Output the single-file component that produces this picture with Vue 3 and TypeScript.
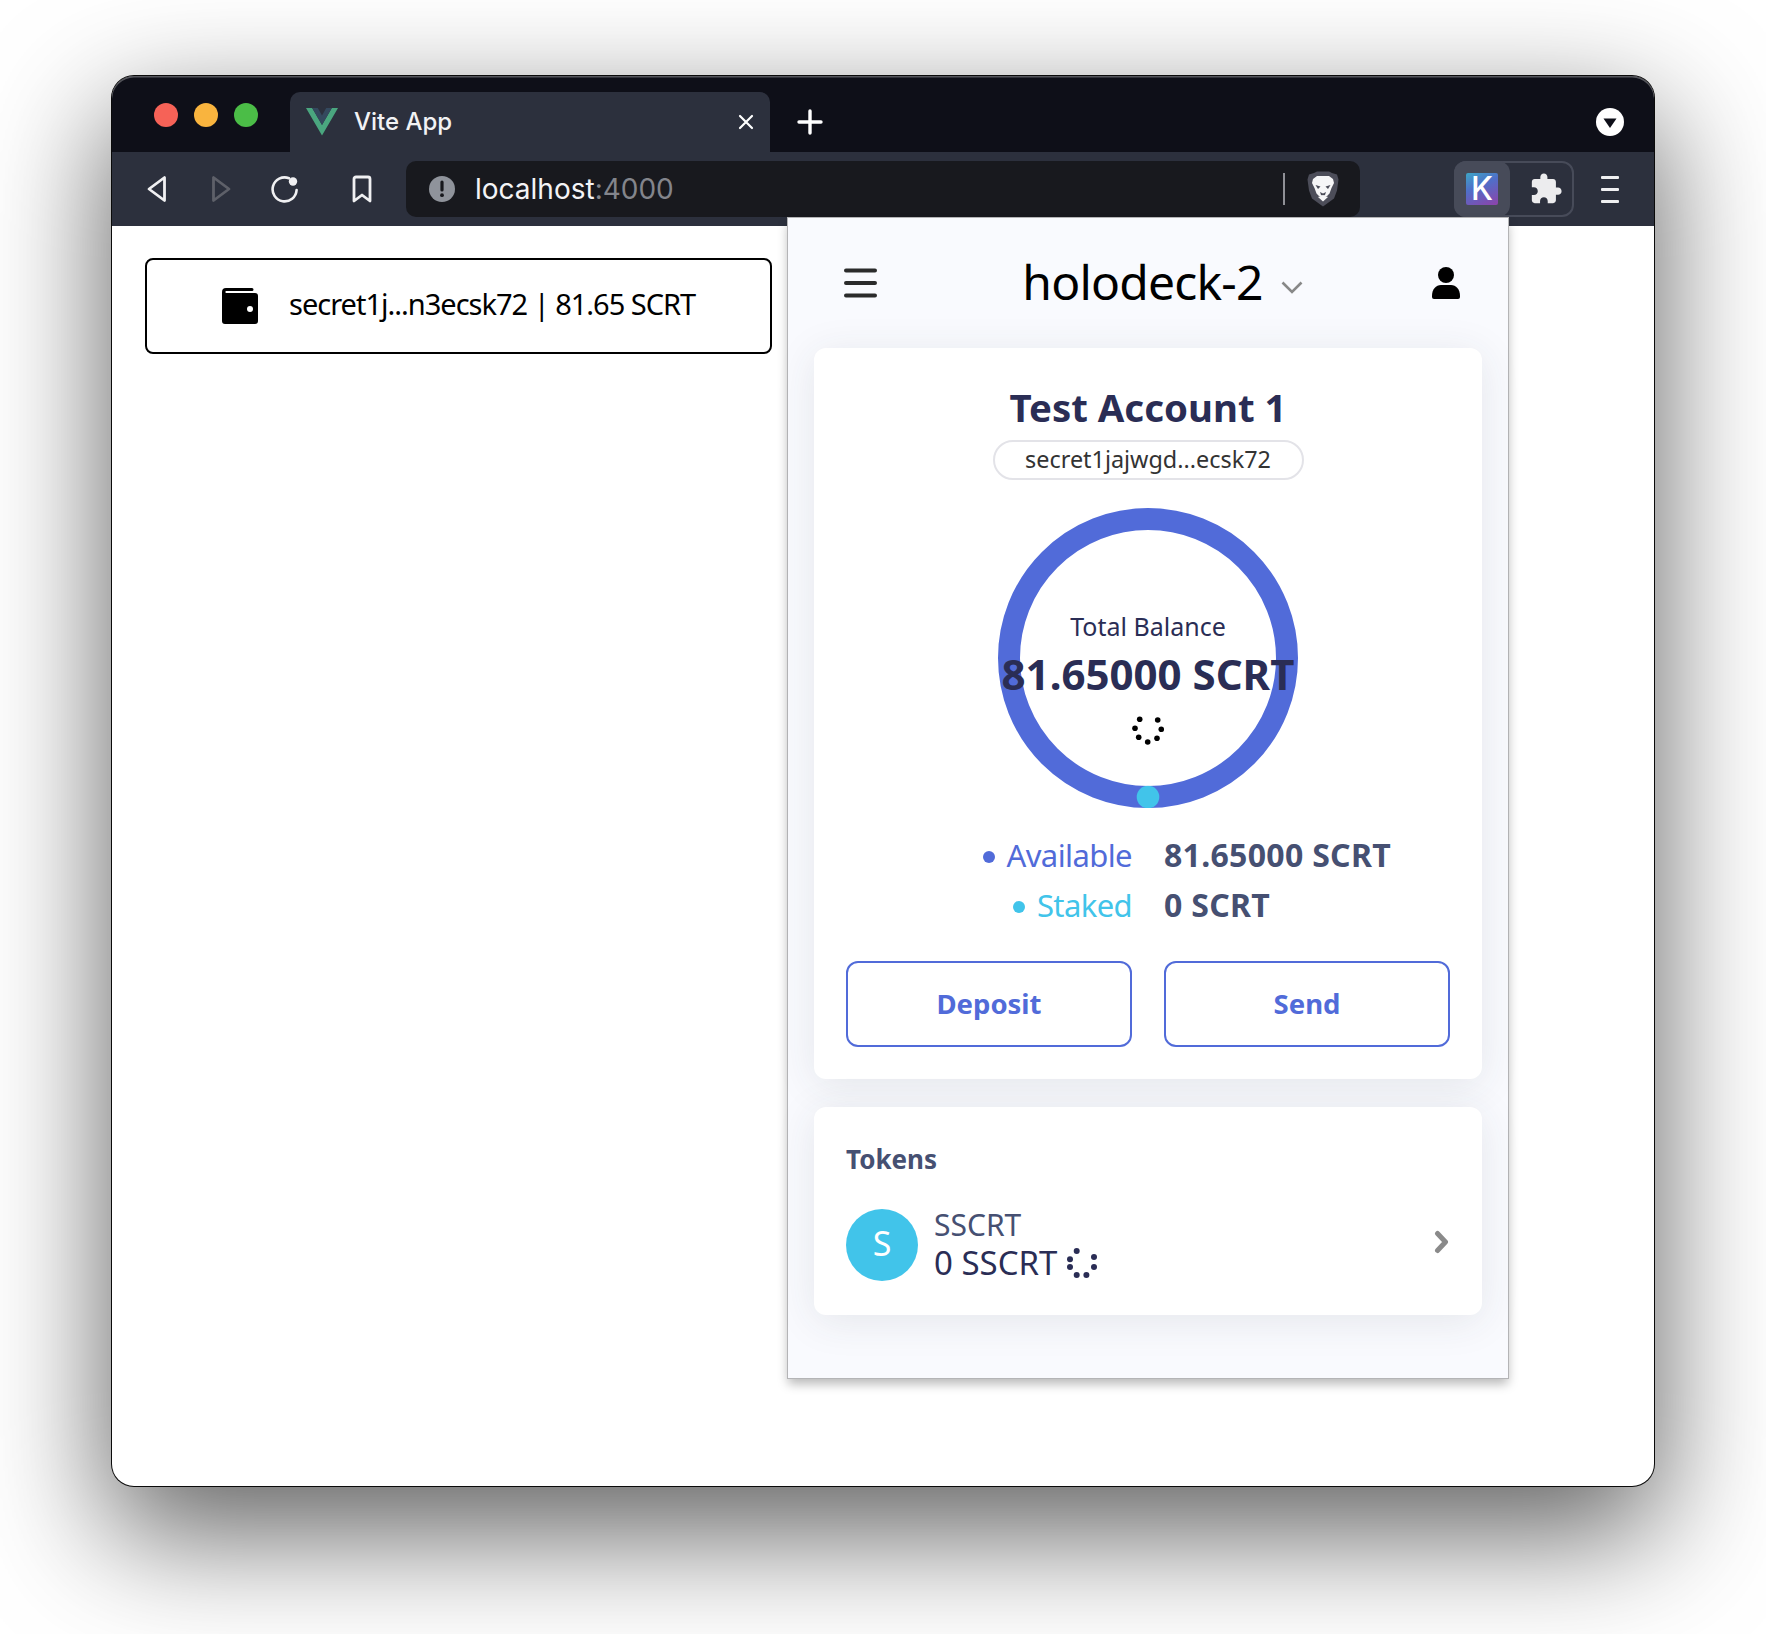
<script setup lang="ts">
const spinnerA = [
  [7.7, 5.3], [25.7, 6], [29.3, 15.3], [25, 24.3], [15.7, 28], [6.7, 23.3], [3, 14.3],
].map(([x, y]) => ({ x, y }))
const spinnerB = [
  [12.7, 6], [30, 12], [30, 22], [22.4, 30], [12.7, 30], [6, 22], [6, 14.3],
].map(([x, y]) => ({ x, y }))
</script>

<template>
  <div class="page">
    <div class="window">
      <div class="tabbar">
        <div class="lights">
          <span class="light red"></span>
          <span class="light amber"></span>
          <span class="light green"></span>
        </div>
        <div class="tab">
          <svg class="vue" viewBox="0 0 32 28" width="32" height="28">
            <path d="M0 0h6.2L16 17 25.8 0H32L16 27.5z" fill="#4aa67f" />
            <path d="M6.2 0h5.6L16 7.4 20.2 0h5.6L16 17z" fill="#34495e" />
          </svg>
          <span class="tab-title">Vite App</span>
          <svg class="tab-close" viewBox="0 0 16 16" width="16" height="16">
            <path d="M2 2l12 12M14 2L2 14" stroke="#fff" stroke-width="2.2" stroke-linecap="round" />
          </svg>
        </div>
        <svg class="plus" viewBox="0 0 26 26" width="26" height="26">
          <path d="M13 2v22M2 13h22" stroke="#fff" stroke-width="3.4" stroke-linecap="round" />
        </svg>
        <div class="tabbar-end">
          <svg viewBox="0 0 28 28" width="28" height="28">
            <circle cx="14" cy="14" r="14" fill="#fff" />
            <path d="M7.5 10.5h13L14 20z" fill="#0e0f18" />
          </svg>
        </div>
      </div>

      <div class="toolbar">
        <div class="nav">
          <svg viewBox="0 0 20 28" width="20" height="28">
            <path d="M17.5 2.5v23L2 14z" fill="none" stroke="#f0f0f2" stroke-width="2.8" stroke-linejoin="round" />
          </svg>
          <svg viewBox="0 0 20 28" width="20" height="28">
            <path d="M2.5 2.5v23L18 14z" fill="none" stroke="#5e6069" stroke-width="2.8" stroke-linejoin="round" />
          </svg>
          <svg class="reload" viewBox="0 0 28 28" width="28" height="28">
            <path d="M18 3.2A12 12 0 1 0 25.6 15" fill="none" stroke="#f0f0f2" stroke-width="2.6" stroke-linecap="round" />
            <circle cx="22" cy="6.5" r="4.2" fill="#f0f0f2" />
          </svg>
          <svg class="bookmark" viewBox="0 0 20 28" width="20" height="28">
            <path d="M2 4a2 2 0 0 1 2-2h12a2 2 0 0 1 2 2v22l-8-6-8 6z" fill="none" stroke="#f0f0f2" stroke-width="2.8" stroke-linejoin="round" />
          </svg>
        </div>
        <div class="urlbar">
          <svg viewBox="0 0 26 26" width="26" height="26">
            <circle cx="13" cy="13" r="13" fill="#8f939b" />
            <path d="M13 6v8" stroke="#17181d" stroke-width="3.2" stroke-linecap="round" />
            <circle cx="13" cy="19.2" r="1.9" fill="#17181d" />
          </svg>
          <span class="url"><span class="host">localhost</span><span class="port">:4000</span></span>
          <span class="sep"></span>
          <svg class="lion" viewBox="0 0 32 36" width="32" height="36">
            <path d="M7 2L10 0.5h12L25 2l5 1.5 1.500 5-1.500 11-3 8L16 35.500 5 27.500l-3-8L0.500 8.500 2 3.500z" fill="#4c4d59" />
            <path d="M6 8l4-3h12l4 3 1 4-2.500 5-2 5.500-2.500 2.500h-8l-2.500-2.500-2-5.500L5 12z" fill="#f6f6f7" />
            <path d="M8.500 14l5 1.500-2.500 2.500zM23.500 14l-5 1.500 2.500 2.500zM13 21l3 1.500 3-1.500-1 3-2 1-2-1z" fill="#4c4d59" />
            <path d="M11 26l5-2 5 2-5 4.500z" fill="#f6f6f7" />
          </svg>
        </div>
        <div class="ext-group">
          <div class="ext-active"><span class="k-box">K</span></div>
          <svg class="puzzle" viewBox="0 0 24 24" width="34" height="34">
            <path d="M20.5 11H19V7c0-1.100-.9-2-2-2h-4V3.500C13 2.120 11.880 1 10.500 1S8 2.120 8 3.500V5H4c-1.100 0-1.990.9-1.990 2v3.800H3.500c1.490 0 2.700 1.210 2.700 2.700s-1.210 2.700-2.700 2.700H2V20c0 1.100.9 2 2 2h3.800v-1.500c0-1.490 1.210-2.700 2.700-2.700 1.490 0 2.700 1.210 2.700 2.700V22H17c1.100 0 2-.9 2-2v-4h1.500c1.380 0 2.500-1.120 2.500-2.500S21.880 11 20.500 11z" fill="#ececee" />
          </svg>
        </div>
        <div class="menu-lines"><i></i><i></i><i></i></div>
      </div>

      <div class="content">
        <button class="wallet-btn">
          <svg viewBox="0 0 36 36" width="36" height="36">
            <path d="M4 0h26a1.500 1.500 0 0 1 0 3H4.500C3 3 3 5 4.500 5H33a3 3 0 0 1 3 3v25a3 3 0 0 1-3 3H3a3 3 0 0 1-3-3V4a4 4 0 0 1 4-4z" fill="#000" />
            <circle cx="28" cy="21" r="3" fill="#fff" />
          </svg>
          <span class="wallet-text">secret1j...n3ecsk72 | 81.65 SCRT</span>
        </button>
      </div>

      <div class="popup">
        <header class="pop-head">
          <svg viewBox="0 0 33 30" width="33" height="30">
            <path d="M2 2.500h29M2 15h29M2 27.500h29" stroke="#2b2b2b" stroke-width="4" stroke-linecap="round" />
          </svg>
          <div class="network">
            <span class="net-name">holodeck-2</span>
            <svg viewBox="0 0 22 13" width="22" height="13">
              <path d="M1.500 1.500L11 11l9.500-9.500" fill="none" stroke="#888" stroke-width="2.600" />
            </svg>
          </div>
          <svg viewBox="0 0 28 32" width="28" height="32">
            <circle cx="14" cy="8" r="8" fill="#000" />
            <path d="M0 29c0-7 4-11 9-11h10c5 0 9 4 9 11v1a2 2 0 0 1-2 2H2a2 2 0 0 1-2-2z" fill="#000" />
          </svg>
        </header>

        <section class="card account">
          <h1 class="acc-name">Test Account 1</h1>
          <div class="addr">secret1jajwgd...ecsk72</div>
          <div class="ring">
            <svg class="ring-svg" viewBox="0 0 300 300" width="300" height="300">
              <circle cx="150" cy="150" r="139" fill="none" stroke="#516bd9" stroke-width="22" />
              <circle cx="150" cy="289" r="11.300" fill="#41c4ea" />
            </svg>
            <div class="ring-text">
              <div class="tb-label">Total Balance</div>
              <div class="tb-value">81.65000 SCRT</div>
              <svg class="spin" viewBox="0 0 32 32" width="32" height="32">
                <circle v-for="(d, i) in spinnerA" :key="i" :cx="d.x" :cy="d.y" r="2.800" fill="#000" />
              </svg>
            </div>
          </div>
          <div class="stats">
            <div class="stat-label blue"><i class="dot"></i>Available</div>
            <div class="stat-val">81.65000 SCRT</div>
            <div class="stat-label sky"><i class="dot"></i>Staked</div>
            <div class="stat-val">0 SCRT</div>
          </div>
          <div class="actions">
            <button class="act">Deposit</button>
            <button class="act">Send</button>
          </div>
        </section>

        <section class="card tokens">
          <h2 class="tok-title">Tokens</h2>
          <div class="tok-row">
            <div class="avatar">S</div>
            <div class="tok-info">
              <div class="tok-sym">SSCRT</div>
              <div class="tok-bal">
                <span>0 SSCRT</span>
                <svg viewBox="0 0 36 36" width="36" height="36">
                  <circle v-for="(d, i) in spinnerB" :key="i" :cx="d.x" :cy="d.y" r="3" fill="#2a2d55" />
                </svg>
              </div>
            </div>
            <svg class="chev" viewBox="0 0 16 24" width="16" height="24">
              <path d="M3.500 3.500l8 8.500-8 8.500" fill="none" stroke="#8a8a8a" stroke-width="5" stroke-linejoin="round" stroke-linecap="round" />
            </svg>
          </div>
        </section>
      </div>
    </div>
  </div>
</template>

<style>
html, body { margin: 0; background: #fff; }
</style>

<style scoped>
.page {
  width: 1766px;
  height: 1634px;
  box-sizing: border-box;
  padding: 76px 112px 148px;
  overflow: hidden;
  background: #fff;
  font-family: "Noto Sans", sans-serif;
}
.window {
  position: relative;
  height: 100%;
  display: flex;
  flex-direction: column;
  background: #fff;
  border-radius: 22px;
  box-shadow: 0 0 0 1px #0a0a0a, 0 44px 122px 4px rgba(0, 0, 0, 0.62);
}
.tabbar {
  height: 76px;
  flex: none;
  display: flex;
  align-items: flex-end;
  background: #0e0f18;
  border-radius: 22px 22px 0 0;
  box-shadow: inset 0 1.5px 0 #55565c;
}
.lights {
  width: 178px;
  height: 76px;
  box-sizing: border-box;
  flex: none;
  display: flex;
  gap: 16px;
  align-items: center;
  padding-left: 42px;
  position: relative;
  top: 1px;
}
.light { width: 24px; height: 24px; border-radius: 50%; }
.red { background: #f66257; }
.amber { background: #f9b43e; }
.green { background: #4bbd47; }
.tab {
  width: 480px;
  height: 60px;
  flex: none;
  box-sizing: border-box;
  display: flex;
  align-items: center;
  padding: 0 16px;
  background: #2c303d;
  border-radius: 10px 10px 0 0;
  color: #f2f2f4;
}
.vue { flex: none; }
.tab-title {
  margin-left: 16px;
  font: 500 24px/30px Inter, sans-serif;
  flex: 1;
}
.plus { margin-left: 27px; flex: none; align-self: center; position: relative; top: 8px; }
.tabbar-end {
  margin-left: auto;
  padding-right: 30px;
  height: 76px;
  display: flex;
  align-items: center;
  position: relative;
  top: 8px;
}
.toolbar {
  height: 74px;
  flex: none;
  display: flex;
  align-items: center;
  background: #2c303d;
}
.nav {
  width: 294px;
  flex: none;
  box-sizing: border-box;
  padding-left: 35px;
  display: flex;
  align-items: center;
}
.nav svg + svg { margin-left: 44px; }
.nav .reload { margin-left: 40px; }
.nav .bookmark { margin-left: 53px; }
.urlbar {
  width: 954px;
  height: 56px;
  flex: none;
  box-sizing: border-box;
  display: flex;
  align-items: center;
  padding: 0 21px 0 23px;
  background: #18191e;
  border-radius: 10px;
}
.url { margin-left: 20px; font: 400 28px/36px Inter, sans-serif; flex: 1; }
.host { color: #f4f4f6; }
.port { color: #83858c; }
.sep { width: 2px; height: 32px; background: #8f9096; margin-right: 22px; }
.lion { flex: none; }
.ext-group {
  margin-left: 94px;
  width: 120px;
  height: 56px;
  flex: none;
  box-sizing: border-box;
  display: flex;
  align-items: center;
  border: 2px solid #474b59;
  border-radius: 12px;
}
.ext-active {
  width: 56px;
  height: 56px;
  margin: -2px 0 -2px -2px;
  flex: none;
  display: flex;
  align-items: center;
  justify-content: center;
  background: #474b59;
  border-radius: 12px;
}
.k-box {
  width: 32px;
  height: 32px;
  border-radius: 2px;
  display: flex;
  align-items: center;
  justify-content: center;
  color: #fff;
  font: 500 32px/32px Inter, sans-serif;
  background: linear-gradient(155deg, #3ea6c6 0%, #4f6fc8 40%, #8e42aa 100%);
}
.puzzle { margin-left: 19px; }
.menu-lines {
  margin-left: 27px;
  width: 18px;
  display: flex;
  flex-direction: column;
  gap: 9px;
}
.menu-lines i { display: block; height: 3px; background: #f0f0f2; border-radius: 1px; }
.content { flex: 1; padding: 32px 0 0 33px; }
.wallet-btn {
  width: 627px;
  height: 96px;
  box-sizing: border-box;
  display: flex;
  align-items: center;
  justify-content: flex-start;
  padding: 0 0 0 75px;
  gap: 31px;
  background: #fff;
  border: 2px solid #000;
  border-radius: 8px;
  color: #000;
  font: 400 29px/36px "Noto Sans", sans-serif;
  letter-spacing: -1px;
}
.wallet-text { position: relative; top: -2px; }
.popup {
  position: absolute;
  top: 142px;
  left: 676px;
  width: 720px;
  height: 1160px;
  box-sizing: border-box;
  padding: 0 26px;
  display: flex;
  flex-direction: column;
  background: #f9fafe;
  box-shadow: 0 0 0 1px #b4b4b6, 0 6px 10px rgba(0, 0, 0, 0.28);
}
.pop-head {
  height: 130px;
  flex: none;
  box-sizing: border-box;
  padding: 0 22px 0 30px;
  display: flex;
  align-items: center;
  justify-content: space-between;
}
.network { display: flex; align-items: center; gap: 18px; margin-left: 16px; margin-top: -3px; }
.net-name { font: 400 48px/60px "Noto Sans", sans-serif; color: #000; letter-spacing: -0.8px; }
.network svg { position: relative; top: 6px; }
.card {
  background: #fff;
  border-radius: 12px;
  box-sizing: border-box;
  padding: 0 32px;
  box-shadow: 0 6px 40px rgba(50, 60, 70, 0.1);
}
.account {
  height: 731px;
  flex: none;
  display: flex;
  flex-direction: column;
  align-items: center;
}
.acc-name {
  margin: 31px 0 0;
  font: 700 38.4px/56px "Noto Sans", sans-serif;
  color: #2a2d55;
}
.addr {
  margin-top: 5px;
  width: 311px;
  height: 40px;
  box-sizing: border-box;
  border: 2px solid #e3e3e8;
  border-radius: 20px;
  text-align: center;
  font: 400 23.4px/35px "Noto Sans", sans-serif;
  color: #333;
}
.ring {
  position: relative;
  width: 300px;
  height: 300px;
  margin-top: 28px;
  flex: none;
}
.ring-svg { display: block; }
.ring-text {
  position: absolute;
  inset: 0;
  display: flex;
  flex-direction: column;
  align-items: center;
  padding-top: 98px;
}
.tb-label { font: 400 25px/40px "Noto Sans", sans-serif; color: #2a2d55; white-space: nowrap; }
.tb-value { font: 700 42px/56px "Noto Sans", sans-serif; color: #2a2d55; white-space: nowrap; }
.spin { margin-top: 12px; }
.stats {
  margin-top: 22px;
  width: 100%;
  display: grid;
  grid-template-columns: 286px 1fr;
  column-gap: 32px;
  grid-auto-rows: 50px;
  align-items: center;
}
.stat-label {
  display: flex;
  align-items: center;
  justify-content: flex-end;
  font: 400 31px/50px "Noto Sans", sans-serif;
  letter-spacing: -0.6px;
}
.dot {
  width: 12px;
  height: 12px;
  border-radius: 50%;
  background: currentColor;
  margin-right: 12px;
  position: relative;
  top: 2px;
}
.blue { color: #516bd9; }
.sky { color: #41c4ea; }
.stat-val { font: 700 32px/50px "Noto Sans", sans-serif; color: #465072; letter-spacing: 0.3px; }
.actions {
  margin-top: 31px;
  width: 100%;
  display: grid;
  grid-template-columns: 1fr 1fr;
  gap: 32px;
}
.act {
  height: 86px;
  box-sizing: border-box;
  background: #fff;
  border: 2px solid #516bd9;
  border-radius: 12px;
  color: #516bd9;
  font: 700 27.5px/34px "Noto Sans", sans-serif;
}
.tokens { margin-top: 28px; height: 208px; flex: none; }
.tok-title {
  margin: 32px 0 0;
  font: 700 26px/40px "Noto Sans", sans-serif;
  color: #465072;
}
.tok-row { margin-top: 28px; display: flex; align-items: center; }
.avatar {
  width: 72px;
  height: 72px;
  flex: none;
  border-radius: 50%;
  background: #41c4ea;
  color: #fff;
  text-align: center;
  font: 400 34px/68px "Noto Sans", sans-serif;
}
.tok-info { margin-left: 16px; flex: 1; }
.tok-sym { font: 400 30px/36px "Noto Sans", sans-serif; color: #465072; }
.tok-bal {
  display: flex;
  align-items: center;
  gap: 7px;
  font: 400 33px/40px "Noto Sans", sans-serif;
  color: #2a2d55;
}
.chev { flex: none; margin-bottom: 6px; }
</style>
